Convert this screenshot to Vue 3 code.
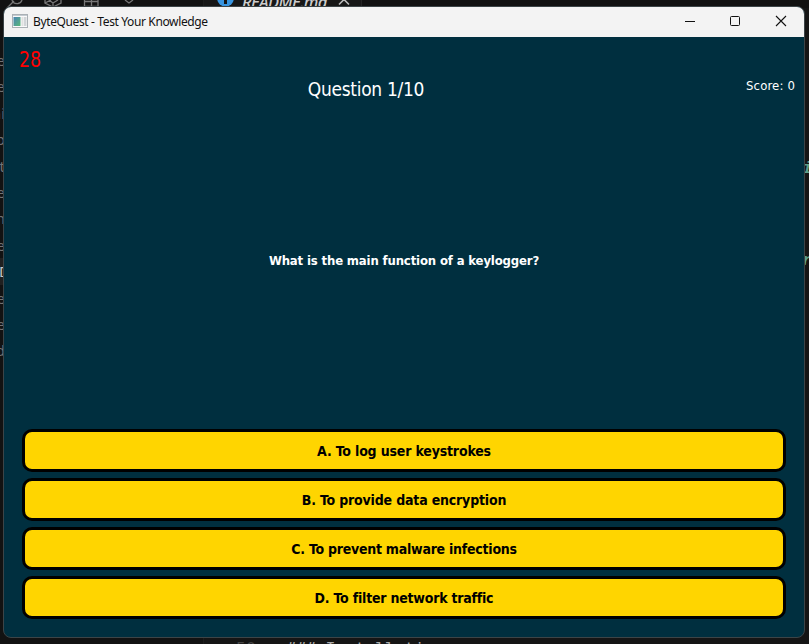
<script setup>
import { ref } from 'vue'

const files = ['e', 'e', 'ni', 'p', 't', 'e', 'n', 'e', 'D', 'e', 'e', 'd']
const activeFile = 8
const time = ref(28)
const score = ref(0)
const answers = [
  { text: 'A. To log user keystrokes', cls: 'a' },
  { text: 'B. To provide data encryption', cls: 'b' },
  { text: 'C. To prevent malware infections', cls: 'c' },
  { text: 'D. To filter network traffic', cls: 'd' },
]
</script>

<template>
  <div class="desktop">
    <div class="editor">
      <aside class="explorer">
        <svg class="tools" width="203" height="8" viewBox="0 0 203 8" fill="none" stroke="#777" stroke-width="1.3">
          <path d="M7 8 14 1M12 0Q13 4 18 3.5Q21 3 22 0" />
          <path d="M45 0V3L53 7 61 3V0M45 3 51 0M53 7V3L49 0M53 3 58 0" />
          <path d="M84.500 0V7M91.500 0V7M98 0V7M84 1.500H98M84 6.500H98" />
          <path d="M125 0 129 3 133 0" />
        </svg>
        <div class="files">
          <div v-for="(f, i) in files" :key="i" class="file" :class="{ active: i === activeFile }"><span>{{ f }}</span></div>
        </div>
      </aside>
      <main class="code">
        <div class="tabs">
          <div class="tab">
            <svg width="17" height="8" viewBox="0 0 17 8"><circle cx="8.500" cy="-1.500" r="8.300" fill="#3794e0" /><path d="M8.500 0V4" stroke="#141414" stroke-width="3" /></svg>
            <span class="tabname">README.md</span>
            <svg width="12" height="8" viewBox="0 0 12 8"><path d="M1 4.500 6 -.5 11 4.500" fill="none" stroke="#bbb" stroke-width="1.600" /></svg>
          </div>
        </div>
        <div class="fragments"><i>i</i><i>r</i></div>
        <div class="line"><span class="num">50</span><span>### Installation</span></div>
      </main>
    </div>

    <section class="window">
      <header class="titlebar">
        <svg class="appicon" width="16" height="14" viewBox="0 0 16 14">
          <defs><linearGradient id="pane" x2="1" y2="1"><stop stop-color="#4b83b4" /><stop offset="1" stop-color="#57b978" /></linearGradient></defs>
          <rect x=".5" y=".5" width="15" height="13" fill="#fafafa" stroke="#aab0b5" />
          <path d="M1 1.500H15" stroke="#c4cbd1" />
          <rect x="1.500" y="3" width="7" height="9" fill="url(#pane)" />
          <rect x="9.500" y="3" width="2" height="9" fill="#e0e0e0" />
          <rect x="12" y="3" width="2.500" height="9" fill="#d1d5d8" />
        </svg>
        <span class="title">ByteQuest - Test Your Knowledge</span>
        <svg class="controls" width="138" height="30" viewBox="0 0 138 30" fill="none" stroke="#111">
          <path d="M19 14.500H29" />
          <rect x="64.500" y="9.500" width="9" height="9" rx="1" />
          <path d="M110 9 120 19M120 9 110 19" stroke-width="1.100" />
        </svg>
      </header>
      <div class="timer"><span>{{ time }}</span></div>
      <div class="status">
        <h1><span>Question 1/10</span></h1>
        <div class="score"><span>Score: {{ score }}</span></div>
      </div>
      <div class="question"><span>What is the main function of a keylogger?</span></div>
      <div class="answers">
        <button v-for="a in answers" :key="a.cls"><span :class="a.cls">{{ a.text }}</span></button>
      </div>
    </section>
  </div>
</template>

<style>
body { margin: 0; overflow: hidden; background: #141414; }
</style>

<style scoped>
* { box-sizing: border-box; }
.desktop { display: grid; width: 809px; height: 644px; overflow: hidden; background: #141414; font-family: "DejaVu Sans Condensed", "DejaVu Sans", sans-serif; font-stretch: condensed; }
.editor, .window { grid-area: 1 / 1; }
.editor { display: flex; height: 644px; overflow: hidden; }
.explorer { width: 204px; flex: none; background: #121212; border-right: 1px solid #1c1c1c; }
.tools { display: block; }
.files { padding-top: 39px; }
.file { height: 26.4px; color: #747474; font: 15px/26.4px "Noto Sans", sans-serif; display: flex; width: 5px; justify-content: flex-end; white-space: nowrap; }
.file.active { background: #202020; color: #c4c4c4; width: 10px; }
.code { flex: 1; display: flex; flex-direction: column; background: #151515; min-width: 0; }
.tabs { height: 8px; overflow: hidden; background: #111; }
.tab { display: flex; width: 158px; height: 8px; padding-left: 13px; border-right: 1px solid #242424; background: #171717; }
.tab svg { flex: none; }
.tabname { margin: -8px 0 0 8px; width: 96px; font: italic 500 16.5px/19px "Noto Sans", sans-serif; letter-spacing: -0.6px; color: #ccc; white-space: nowrap; }
.fragments { display: flex; flex-direction: column; align-items: flex-end; gap: 66px; padding-top: 148px; font: italic bold 17px/26px "Liberation Mono", monospace; color: #5c9f8c; }
.fragments i { width: 5px; overflow: hidden; text-indent: -2px; }
.line { margin-top: auto; height: 5px; overflow: hidden; display: flex; font: 16.5px/20px "DejaVu Sans Mono", monospace; letter-spacing: -0.05px; color: #aaa; padding-left: 32px; white-space: nowrap; }
.num { width: 50px; color: #444; }
.window { display: flex; flex-direction: column; width: 802px; height: 632px; margin: 6px 0 0 3px; overflow: hidden; background: #002f3f; border: 1px solid #3c4447; border-radius: 8px; }
.titlebar { display: flex; align-items: center; height: 30px; flex: none; background: #f3f3f3; }
.appicon { margin-left: 8px; margin-top: -2px; }
.title { margin-left: 5px; font: 12px/30px "Noto Sans", sans-serif; color: #111; letter-spacing: -0.37px; white-space: nowrap; }
.controls { margin-left: auto; }
.timer { height: 40px; padding: 10px 0 0 15px; color: #f00; font-size: 22px; line-height: 26px; }
.timer span { display: inline-block; transform: scaleX(.88); transform-origin: left; }
.status { display: flex; height: 30px; color: #fff; }
h1 { width: 724px; margin: 0; font-size: 19px; font-weight: 400; line-height: 25px; text-align: center; letter-spacing: -0.3px; }
.score { margin-left: auto; padding-right: 9px; font-size: 13px; line-height: 17px; letter-spacing: 0.15px; }
.question { flex: 1; display: flex; justify-content: center; padding-top: 145px; color: #fff; font-size: 13px; line-height: 18px; font-weight: 700; letter-spacing: -0.15px; }
.answers { display: grid; gap: 6px; padding: 0 18px 18px; }
button { display: block; height: 43px; padding: 1px 0 0; background: #ffd500; border: 3px solid #000; border-radius: 10px; color: #000; font: 700 14px/37px "DejaVu Sans Condensed", "DejaVu Sans", sans-serif; font-stretch: condensed; text-align: center; }
.a { letter-spacing: -0.17px; }
.b { letter-spacing: -0.18px; }
.c { letter-spacing: -0.25px; }
.d { letter-spacing: -0.22px; }
</style>
